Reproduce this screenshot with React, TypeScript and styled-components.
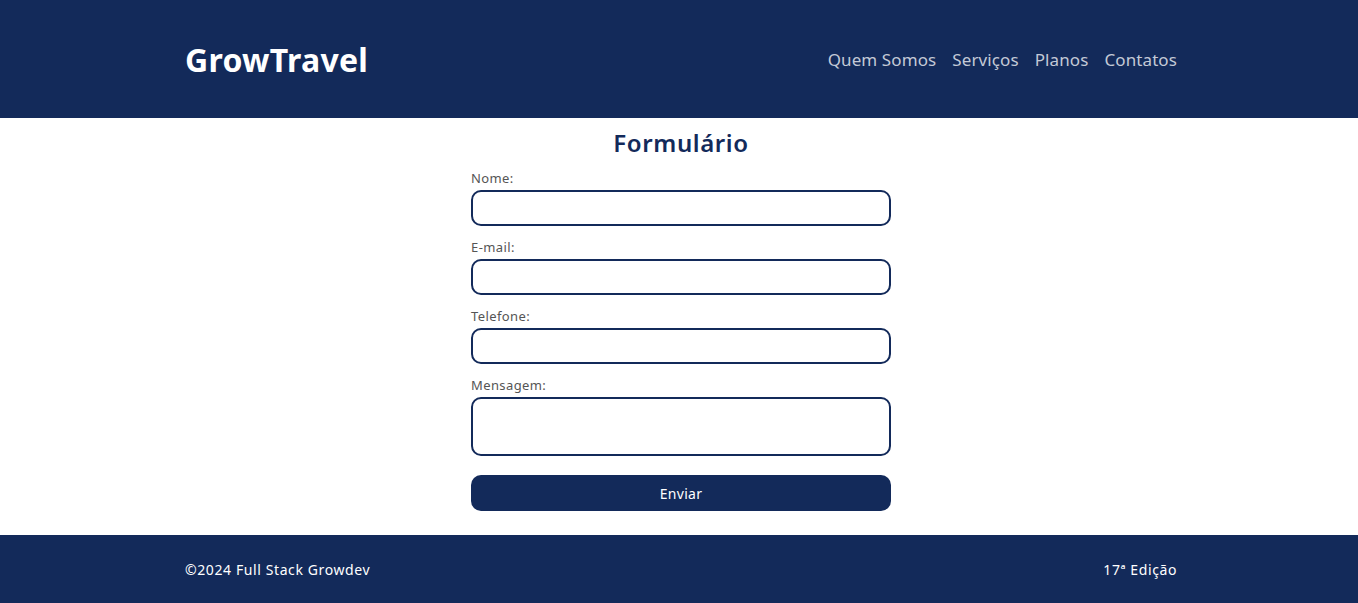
import styled, { createGlobalStyle } from "styled-components";

const GlobalStyle = createGlobalStyle`
  * { box-sizing: border-box; }
  body {
    margin: 0;
    padding-left: 4px;
    font-family: "Noto Sans", "Open Sans", sans-serif;
    background: #ffffff;
  }
`;

const navItems = ["Quem Somos", "Serviços", "Planos", "Contatos"];

const fields = [
  { label: "Nome:", type: "text" },
  { label: "E-mail:", type: "email" },
  { label: "Telefone:", type: "tel" },
];

export default function App() {
  return (
    <>
      <GlobalStyle />
      <Header>
        <Container>
          <Logo>GrowTravel</Logo>
          <Nav>
            {navItems.map((item) => (
              <NavLink key={item} href="#">
                {item}
              </NavLink>
            ))}
          </Nav>
        </Container>
      </Header>
      <Main>
        <Title>Formulário</Title>
        <Form onSubmit={(e) => e.preventDefault()}>
          {fields.map((f) => (
            <Field key={f.label}>
              <Label>{f.label}</Label>
              <Input type={f.type} />
            </Field>
          ))}
          <Field>
            <Label>Mensagem:</Label>
            <TextArea />
          </Field>
          <Button type="submit">Enviar</Button>
        </Form>
      </Main>
      <Footer>
        <Container>
          <FooterText>©2024 Full Stack Growdev</FooterText>
          <FooterText>17ª Edição</FooterText>
        </Container>
      </Footer>
    </>
  );
}

const Header = styled.header`
  height: 118px;
  margin-left: -4px;
  padding-left: 4px;
  background: #132a5a;
  display: flex;
  align-items: center;
`;

const Container = styled.div`
  width: 992px;
  margin: 0 auto;
  display: flex;
  align-items: center;
  justify-content: space-between;
`;

const Logo = styled.h1`
  margin: 0;
  color: #ffffff;
  font-size: 32px;
  font-weight: 700;
  letter-spacing: 0.3px;
`;

const Nav = styled.nav`
  display: flex;
  gap: 16px;
`;

const NavLink = styled.a`
  color: #c3c9d6;
  text-decoration: none;
  font-size: 17px;
  letter-spacing: 0.1px;
`;

const Main = styled.main`
  height: 417px;
  padding-top: 10px;
  display: flex;
  flex-direction: column;
  align-items: center;
`;

const Title = styled.h2`
  margin: 0 0 12px;
  color: #132a5a;
  font-size: 24px;
  line-height: 30px;
  font-weight: 600;
  letter-spacing: 0.6px;
`;

const Form = styled.form`
  width: 420px;
  display: flex;
  flex-direction: column;
`;

const Field = styled.div`
  display: flex;
  flex-direction: column;
  margin-bottom: 13px;
  &:last-of-type {
    margin-bottom: 19px;
  }
`;

const Label = styled.label`
  font-size: 13px;
  line-height: 16px;
  color: #555555;
  letter-spacing: 0.4px;
  margin-bottom: 4px;
`;

const Input = styled.input`
  height: 36px;
  border: 2px solid #132a5a;
  border-radius: 10px;
  padding: 0 10px;
  font: inherit;
  outline: none;
`;

const TextArea = styled.textarea`
  height: 59px;
  border: 2px solid #132a5a;
  border-radius: 10px;
  padding: 8px 10px;
  font: inherit;
  resize: none;
  outline: none;
`;

const Button = styled.button`
  height: 36px;
  border: none;
  border-radius: 10px;
  background: #132a5a;
  color: #ffffff;
  font-family: inherit;
  font-size: 14px;
  letter-spacing: 0.3px;
  cursor: pointer;
`;

const Footer = styled.footer`
  height: 68px;
  margin-left: -4px;
  padding-left: 4px;
  background: #132a5a;
  display: flex;
  align-items: center;
`;

const FooterText = styled.span`
  color: #ffffff;
  font-size: 14px;
  letter-spacing: 0.6px;
`;
